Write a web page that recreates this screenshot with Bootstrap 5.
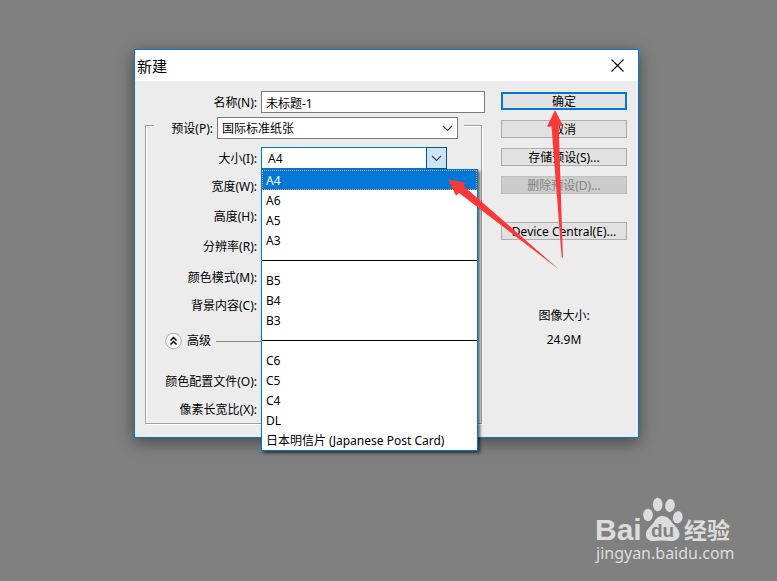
<!DOCTYPE html>
<html lang="zh-CN">
<head>
<meta charset="utf-8">
<meta name="viewport" content="width=device-width, initial-scale=1">
<title>新建</title>
<link href="https://cdn.jsdelivr.net/npm/bootstrap@5.3.0/dist/css/bootstrap.min.css" rel="stylesheet">
<style>
  body {
    background: #808080;
    color: #000;
    font-family: "Noto Sans", "Noto Sans CJK SC", sans-serif;
    font-size: 12px;
    line-height: 20px;
  }
  .desktop { padding: 49px 138px 24px 134px; }
  .dialog { background: #ececec; border: 1px solid #0078d7; box-shadow: 0 4px 16px rgba(0, 0, 0, .45); }
  .title-bar { height: 31px; padding: 0 10px 0 2px; }
  .title-bar h1 { font-size: 15px; font-weight: 400; line-height: 28px; }
  .dialog-main { gap: 16px; padding: 10px 11px 13px 10px; }
  .field { gap: 4px; height: 22px; }
  .field > label { width: 111px; flex: none; text-align: right; white-space: nowrap; padding-top: 2px; }
  .field.name-field > label { width: 112px; }
  .box { height: 22px; background: #fff; border: 1px solid #7a7a7a; border-radius: 0; color: #000; font-size: 12px; line-height: 18px; padding: 1px 4px 0; min-width: 0; appearance: none; }
  .box.covered { width: 180px; }
  .group { margin: 12px 3px 0 0; padding-bottom: 3px; border: 1px solid #a0a0a0; box-shadow: 1px 1px 0 #fff, inset 1px 1px 0 #fff; }
  .preset-field { margin: -9px 17px 0 8px; padding-right: 6px; background: #ececec; }
  .preset-field > label { width: 59px; }
  .preset-field .box, .size-combo .box { width: 100%; }
  .arrow-down { right: 5px; top: 8px; pointer-events: none; }
  .size-combo { width: 186px; }
  .size-combo .box { border-color: #0078d7; border-right: 0; padding-left: 6px; }
  .drop-btn { width: 21px; height: 22px; flex: none; background: #cce4f7; border: 1px solid #005499; }
  .near { margin-top: 6px; }
  .apart { margin-top: 8px; }
  .section { margin-top: 9px; }
  .size-menu { width: 217px; top: 22px; left: 0; z-index: 5; background: #fff; border: 1px solid #0078d7; box-shadow: 2px 2px 3px rgba(0, 0, 0, .6); }
  .size-menu button { height: 20px; padding: 2px 4px 0; border: 0; background: none; color: #000; line-height: 18px; }
  .size-menu button.chosen { background: #0078d7; color: #fff; outline: 1px dotted #f0964a; outline-offset: -1px; }
  .size-menu .split { height: 20px; padding-top: 10px; }
  .size-menu .split hr { margin: 0; border-top: 1px solid #000; opacity: 1; }
  .advanced { gap: 5px; height: 22px; margin: 14px 8px 18px 19px; }
  .advanced hr { margin: 0; border-color: #888; opacity: 1; }
  .side { width: 126px; flex: none; padding-top: 1px; }
  .act { height: 18px; padding: 1px 0 0; border: 1px solid #adadad; background: #e1e1e1; color: #000; line-height: 16px; white-space: nowrap; margin-bottom: 10px; }
  .act.default { border: 2px solid #0078d7; line-height: 14px; }
  .act:disabled { background: #ccc; border-color: #bfbfbf; color: #838383; }
  .act.device { margin-top: 28px; }
  .image-size { margin-top: 54px; line-height: 24px; }
  .pointers { left: 305px; top: 50px; z-index: 6; pointer-events: none; }
  .watermark { right: 41px; bottom: 17px; width: 140px; color: #dcdcdc; }
  .watermark .brand { height: 45px; overflow: visible; }
  .watermark .site { font-size: 16px; line-height: 22px; }
</style>
</head>
<body>
<main class="desktop">
  <section class="dialog position-relative" aria-label="新建">
    <header class="title-bar bg-white d-flex align-items-center justify-content-between">
      <h1 class="m-0">新建</h1>
      <button type="button" class="border-0 bg-transparent p-1 d-flex" aria-label="关闭">
        <svg width="13" height="13" viewBox="0 0 13 13" fill="none" stroke="#000" stroke-width="1.1"><path d="M.5.5l12 12M12.500.5l-12 12"/></svg>
      </button>
    </header>
    <div class="dialog-main d-flex">
      <div class="flex-grow-1">
        <div class="field name-field d-flex align-items-center">
          <label for="docName">名称(N):</label>
          <input id="docName" class="box flex-grow-1" type="text" value="未标题-1">
        </div>
        <div class="group">
          <div class="field preset-field d-flex align-items-center">
            <label for="preset">预设(P):</label>
            <div class="position-relative d-flex flex-grow-1">
              <select id="preset" class="box"><option>国际标准纸张</option></select>
              <svg class="arrow-down position-absolute" width="11" height="7" viewBox="0 0 11 7" fill="none" stroke="#444" stroke-width="1.2"><path d="M1 1l4.500 4.500L10 1"/></svg>
            </div>
          </div>
          <div class="field apart d-flex align-items-center">
            <label for="size">大小(I):</label>
            <div class="size-combo position-relative d-flex">
              <select id="size" class="box"><option>A4</option></select>
              <button type="button" class="drop-btn p-0 d-flex align-items-center justify-content-center" aria-label="展开大小列表">
                <svg width="11" height="7" viewBox="0 0 11 7" fill="none" stroke="#444" stroke-width="1.2"><path d="M1 1l4.500 4.500L10 1"/></svg>
              </button>
              <div class="size-menu position-absolute d-flex flex-column">
                <button type="button" class="chosen text-start">A4</button>
                <button type="button" class="text-start">A6</button>
                <button type="button" class="text-start">A5</button>
                <button type="button" class="text-start">A3</button>
                <div class="split"><hr></div>
                <button type="button" class="text-start">B5</button>
                <button type="button" class="text-start">B4</button>
                <button type="button" class="text-start">B3</button>
                <div class="split"><hr></div>
                <button type="button" class="text-start">C6</button>
                <button type="button" class="text-start">C5</button>
                <button type="button" class="text-start">C4</button>
                <button type="button" class="text-start">DL</button>
                <button type="button" class="text-start text-nowrap">日本明信片 (Japanese Post Card)</button>
              </div>
            </div>
          </div>
          <div class="field near d-flex align-items-center"><label for="w">宽度(W):</label><input id="w" class="box covered" type="text"></div>
          <div class="field apart d-flex align-items-center"><label for="h">高度(H):</label><input id="h" class="box covered" type="text"></div>
          <div class="field apart d-flex align-items-center"><label for="res">分辨率(R):</label><input id="res" class="box covered" type="text"></div>
          <div class="field section d-flex align-items-center"><label for="mode">颜色模式(M):</label><select id="mode" class="box covered"></select></div>
          <div class="field near d-flex align-items-center"><label for="bg">背景内容(C):</label><select id="bg" class="box covered"></select></div>
          <div class="advanced d-flex align-items-center">
            <button type="button" class="border-0 bg-transparent p-0 d-flex" aria-label="收起高级选项">
              <svg width="17" height="18" viewBox="0 0 17 18" fill="none"><circle cx="8.500" cy="9" r="7.800" fill="#f8f8f8" stroke="#aaa"/><path d="M5.500 8.500l3-3 3 3M5.500 12.500l3-3 3 3" stroke="#000" stroke-width="1.500"/></svg>
            </button>
            <span>高级</span>
            <hr class="flex-grow-1">
          </div>
          <div class="field d-flex align-items-center"><label for="profile">颜色配置文件(O):</label><select id="profile" class="box covered"></select></div>
          <div class="field near d-flex align-items-center"><label for="ratio">像素长宽比(X):</label><select id="ratio" class="box covered"></select></div>
        </div>
      </div>
      <aside class="side d-flex flex-column">
        <button type="button" class="act default">确定</button>
        <button type="button" class="act">取消</button>
        <button type="button" class="act">存储预设(S)...</button>
        <button type="button" class="act mb-0" disabled>删除预设(D)...</button>
        <button type="button" class="act device">Device Central(E)...</button>
        <div class="image-size text-center">图像大小:<br>24.9M</div>
      </aside>
    </div>
    <svg class="pointers position-absolute" width="130" height="180" viewBox="440 100 130 180" fill="#fd3838" aria-hidden="true">
      <path d="M555 110L563 125.700 558.700 126 562.900 257.700H561.700L551.500 126.500 547 126.700Z"/>
      <path d="M448 179.300L466.300 183 463.300 185.700 559.600 270 459 193 456 195.700Z"/>
    </svg>
  </section>
</main>
<div class="watermark position-absolute">
  <svg class="brand d-block" width="140" height="45" viewBox="596 497 140 45" fill="#dcdcdc">
    <text x="595" y="540" font-family="Liberation Sans" font-weight="700" font-size="30">Bai</text>
    <ellipse cx="648" cy="515" rx="4.800" ry="6.200"/>
    <ellipse cx="657.700" cy="504.500" rx="4.800" ry="6.800"/>
    <ellipse cx="670" cy="505.500" rx="4.800" ry="6.500" transform="rotate(8 670 505.500)"/>
    <ellipse cx="677.800" cy="517.300" rx="4.800" ry="6.200" transform="rotate(12 677.800 517.300)"/>
    <path d="M662 516C657 516 655 521 652 524.500C649 528 646 530 646 534.500C646 539 649.500 541.500 654 541C659 540.300 665 540.300 670 541C675 541.500 679.500 539 679.500 534.500C679.500 530 676 527 673 523.500C670 520 668 516 662 516Z"/>
    <text x="651" y="537" font-family="Liberation Sans" font-weight="700" font-size="19" fill="#808080">du</text>
    <text x="684" y="539" font-family="Noto Sans CJK SC" font-weight="700" font-size="23">经验</text>
  </svg>
  <div class="site text-nowrap">jingyan.baidu.com</div>
</div>
<script src="https://cdn.jsdelivr.net/npm/bootstrap@5.3.0/dist/js/bootstrap.bundle.min.js"></script>
</body>
</html>
